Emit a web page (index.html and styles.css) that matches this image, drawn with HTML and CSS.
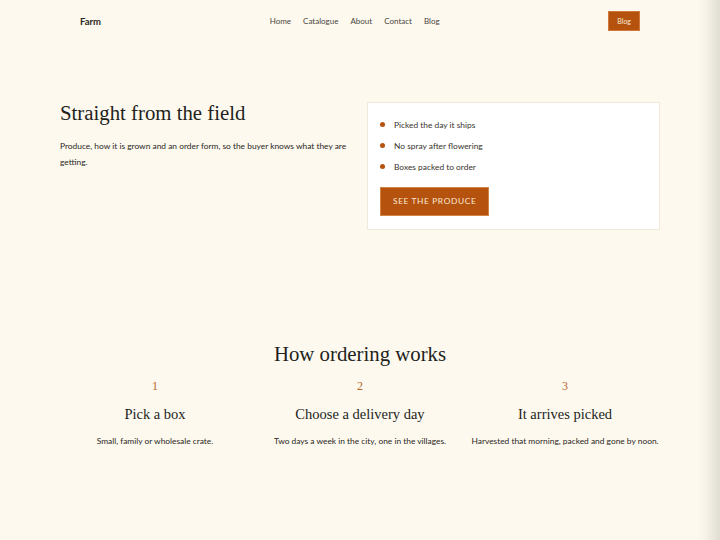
FILE: index.html
```html
<!DOCTYPE html>
<html lang="en">
<head>
    <meta charset="UTF-8">
    <meta name="viewport" content="width=device-width, initial-scale=1.0">
    <title>Farm</title>
    <link rel="stylesheet" href="styles.css">
</head>
<body>
    <header class="site-header">
        <div class="brand">Farm</div>
        <nav class="nav">
            <a href="#">Home</a>
            <a href="#">Catalogue</a>
            <a href="#">About</a>
            <a href="#">Contact</a>
            <a href="#">Blog</a>
        </nav>
        <a class="header-btn" href="#">Blog</a>
    </header>

    <main class="container">
        <section class="hero">
            <div class="hero-text">
                <h1>Straight from the field</h1>
                <p>Produce, how it is grown and an order form, so the buyer knows what they are getting.</p>
            </div>
            <div class="card">
                <ul class="points">
                    <li>Picked the day it ships</li>
                    <li>No spray after flowering</li>
                    <li>Boxes packed to order</li>
                </ul>
                <a class="btn" href="#">See the produce</a>
            </div>
        </section>

        <section class="steps">
            <h2>How ordering works</h2>
            <div class="step-grid">
                <div class="step">
                    <div class="num">1</div>
                    <h3>Pick a box</h3>
                    <p>Small, family or wholesale crate.</p>
                </div>
                <div class="step">
                    <div class="num">2</div>
                    <h3>Choose a delivery day</h3>
                    <p>Two days a week in the city, one in the villages.</p>
                </div>
                <div class="step">
                    <div class="num">3</div>
                    <h3>It arrives picked</h3>
                    <p>Harvested that morning, packed and gone by noon.</p>
                </div>
            </div>
        </section>
    </main>
</body>
</html>
```

FILE: styles.css
```css
html {
    background: linear-gradient(to right, #fdf9ef calc(100% - 22px), #f6f2e7 calc(100% - 14px), #e0ddd2 100%);
    min-height: 100%;
}
body {
    margin: 0;
    font-family: Lato, "Open Sans", sans-serif;
    color: #2a2622;
    font-size: 8.4px;
}
a {
    color: inherit;
    text-decoration: none;
}
.site-header {
    height: 42px;
    padding: 0 80px;
    display: flex;
    align-items: center;
    justify-content: space-between;
}
.brand {
    font-weight: bold;
    font-size: 9.5px;
    color: #2a2622;
}
.nav {
    display: flex;
    gap: 12px;
    font-size: 8px;
    color: #4a4540;
}
.header-btn {
    background-color: #b5520d;
    border: 1px solid #cf7a3c;
    color: #fbe9d6;
    height: 20px;
    padding: 0 8px;
    display: flex;
    align-items: center;
    font-size: 7px;
    box-sizing: border-box;
}
.container {
    width: 600px;
    margin: 0 auto;
}
.hero {
    display: grid;
    grid-template-columns: 1fr 1fr;
    gap: 14px;
    padding-top: 60px;
    align-items: start;
}
h1, h2, h3 {
    font-family: "Liberation Serif", serif;
    font-weight: normal;
    color: #231f1b;
    margin: 0;
}
h1 {
    font-size: 20.8px;
    line-height: 26px;
    margin-top: -2px;
}
.hero-text p {
    margin: 12px 0 0;
    line-height: 16px;
    padding-right: 4px;
}
.card {
    background-color: white;
    border: 1px solid #f1eadb;
    padding: 12px 13px 13px 12px;
}
.points {
    list-style: none;
    margin: 0 0 9px;
    padding: 0;
}
.points li {
    line-height: 21px;
    padding-left: 14px;
    position: relative;
    color: #38332e;
}
.points li::before {
    content: "";
    position: absolute;
    left: 0;
    top: 7px;
    width: 5px;
    height: 5px;
    border-radius: 50%;
    background-color: #b5520d;
}
.btn {
    display: inline-block;
    background-color: #b5520d;
    border: 1px solid #d08447;
    color: #fbe9d6;
    text-transform: uppercase;
    letter-spacing: 0.6px;
    font-size: 8.4px;
    line-height: 27px;
    padding: 0 12px;
}
.steps {
    margin-top: 112px;
    text-align: center;
}
h2 {
    font-size: 20.8px;
    line-height: 23px;
}
.step-grid {
    display: grid;
    grid-template-columns: repeat(3, 1fr);
    gap: 15px;
}
.num {
    font-family: "Liberation Serif", serif;
    color: #b9682a;
    font-size: 12px;
    line-height: 16px;
    margin-top: 13px;
}
h3 {
    font-size: 14.5px;
    line-height: 20px;
    margin-top: 10px;
}
.step p {
    margin: 9px 0 0;
    line-height: 16px;
    color: #2a2622;
}
```
